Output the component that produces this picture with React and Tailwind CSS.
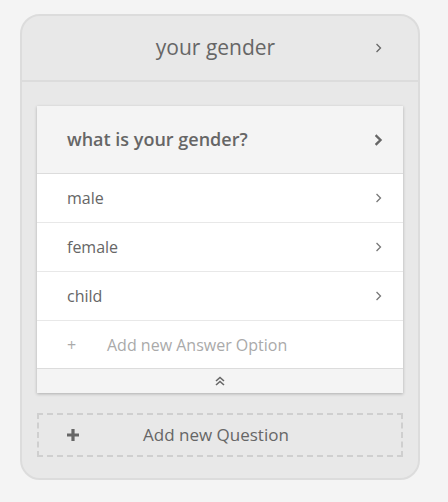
import React from "react";

const Chev = ({ bold, className = "" }) => (
  <svg width="8" height="12" viewBox="0 0 8 12" className={className}>
    <path d={bold ? "M1.5 2 L5.5 6 L1.5 10" : "M2 2.5 L5.5 6 L2 9.5"} fill="none" stroke="currentColor" strokeWidth={bold ? 2.4 : 1.3} strokeLinecap="square" />
  </svg>
);

const Row = ({ label }) => (
  <div className="flex items-center justify-between h-[49px] border-b border-[#e8e8e8] pl-[30px] pr-[20px] bg-white">
    <span className="text-[16px] text-[#666]">{label}</span>
    <Chev className="text-[#777]" />
  </div>
);

export default function App() {
  return (
    <div className="min-h-[502px] bg-[#f4f4f4] pt-[14px] pl-[20px]" style={{ fontFamily: '"Open Sans", sans-serif' }}>
      <div className="w-[400px] h-[466px] rounded-[20px] border-2 border-[#dcdcdc] bg-[#e8e8e8] flex flex-col">
        <div className="h-[66px] flex items-center border-b-2 border-[#dcdcdc] pl-[100px] pr-[35px]">
          <div className="flex-1 text-center text-[21px] text-[#666] pr-[66px]">your gender</div>
          <Chev className="text-[#666]" />
        </div>
        <div className="px-[15px] pt-[24px]">
          <div className="bg-white shadow-[0_1px_3px_rgba(0,0,0,0.25)]">
            <div className="h-[68px] flex items-center justify-between bg-[#f4f4f4] border-b border-[#dcdcdc] pl-[30px] pr-[20px]">
              <span className="text-[18px] font-semibold text-[#666]">what is your gender?</span>
              <Chev bold className="text-[#666]" />
            </div>
            <Row label="male" />
            <Row label="female" />
            <Row label="child" />
            <div className="flex items-center h-[47px] pl-[30px] text-[16px] text-[#aaa]">
              <span className="w-[40px]">+</span>
              <span>Add new Answer Option</span>
            </div>
            <div className="h-[25px] flex items-center justify-center bg-[#f4f4f4] border-t border-[#dcdcdc]">
              <svg width="12" height="12" viewBox="0 0 12 12" className="text-[#666]">
                <path d="M2 6 L6 2.5 L10 6 M2 10 L6 6.5 L10 10" fill="none" stroke="currentColor" strokeWidth="1.6" />
              </svg>
            </div>
          </div>
          <div className="mt-[20px] h-[44px] border-2 border-dashed border-[#cfcfcf] flex items-center pl-[27px]">
            <svg width="14" height="14" viewBox="0 0 14 14" className="text-[#666]">
              <path d="M7 1 V13 M1 7 H13" stroke="currentColor" strokeWidth="3.2" />
            </svg>
            <span className="ml-[63px] text-[17px] text-[#666]">Add new Question</span>
          </div>
        </div>
      </div>
    </div>
  );
}
